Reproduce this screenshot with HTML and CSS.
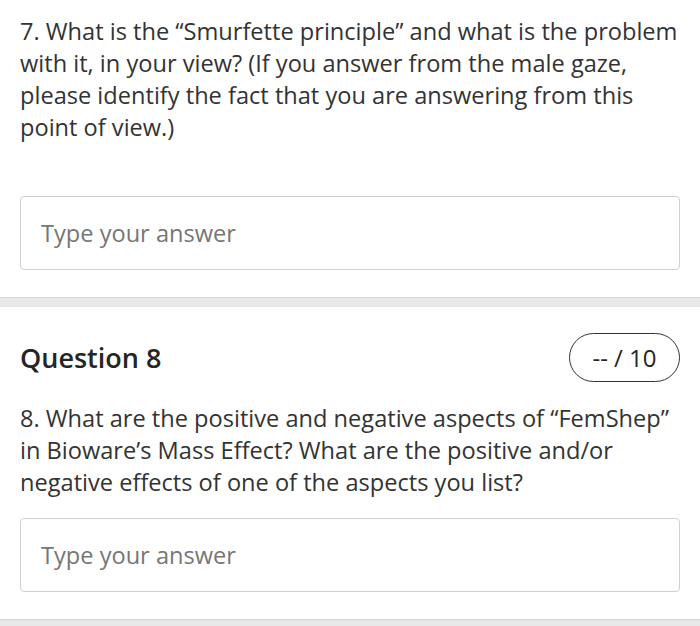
FILE: index.html
```html
<!DOCTYPE html>
<html>
<head>
<meta charset="utf-8">
<link rel="stylesheet" href="styles.css">
</head>
<body>
<section class="question q7">
  <p class="prompt">7. What is the “Smurfette principle” and what is the problem<br>with it, in your view? (If you answer from the male gaze,<br>please identify the fact that you are answering from this<br>point of view.)</p>
  <div class="answer q7-answer">Type your answer</div>
</section>
<div class="divider"></div>
<section class="question q8">
  <div class="q-header">
    <h2 class="q-title">Question 8</h2>
    <span class="score">-- / 10</span>
  </div>
  <p class="prompt">8. What are the positive and negative aspects of “FemShep”<br>in Bioware’s Mass Effect? What are the positive and/or<br>negative effects of one of the aspects you list?</p>
  <div class="answer">Type your answer</div>
</section>
<div class="divider"></div>
</body>
</html>
```
FILE: styles.css
```css
html, body {
  margin: 0;
  padding: 0;
  background: #ffffff;
}
body {
  font-family: "Open Sans", "Noto Sans", sans-serif;
  color: #333333;
  width: 700px;
  overflow: hidden;
}
.question {
  padding: 0 20px;
}
.q7 {
  padding-top: 15px;
}
.prompt {
  margin: 0;
  font-size: 23.6px;
  line-height: 32px;
  white-space: nowrap;
}
.answer {
  box-sizing: border-box;
  height: 74px;
  border: 1px solid #d0d0d0;
  border-radius: 4px;
  padding: 0 20px;
  display: flex;
  align-items: center;
  font-size: 23.6px;
  color: #767676;
  margin-top: 20px;
  margin-bottom: 27px;
}
.q7-answer {
  margin-top: 53px;
}
.divider {
  height: 10px;
  box-sizing: border-box;
  border-top: 1px solid #d6d6d6;
  background: #e8e8e8;
}
.q-header {
  display: flex;
  justify-content: space-between;
  align-items: center;
  margin-top: 26px;
  margin-bottom: 20px;
}
.q-title {
  margin: 0;
  font-size: 27px;
  font-weight: 600;
  color: #252525;
}
.score {
  box-sizing: border-box;
  width: 111px;
  height: 49px;
  border: 1.5px solid #333;
  border-radius: 25px;
  display: flex;
  align-items: center;
  justify-content: center;
  font-size: 24px;
  color: #252525;
}
```
